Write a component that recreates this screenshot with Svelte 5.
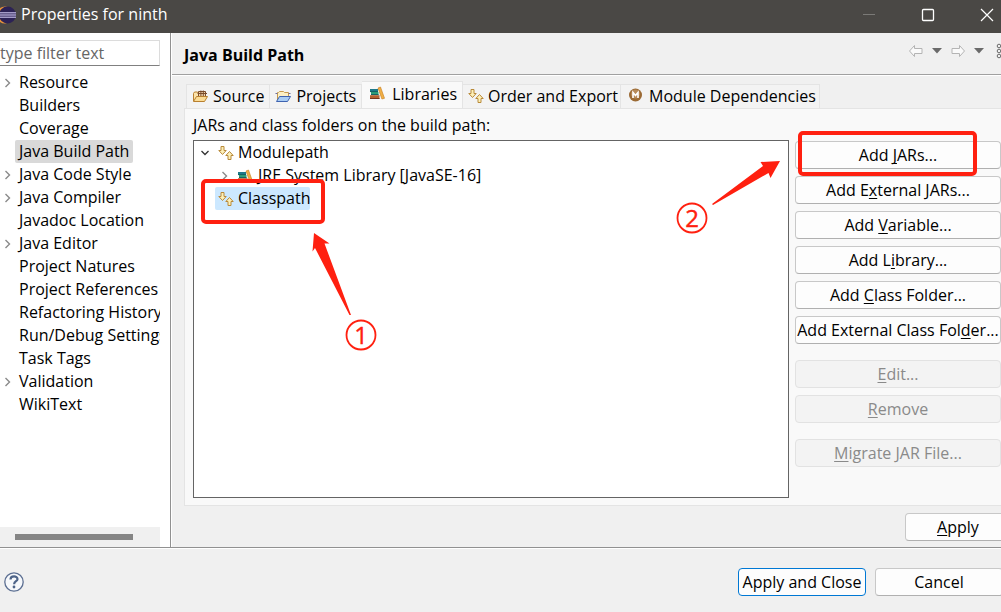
<script>
  const pages = [
    { name: 'Resource', open: true },
    { name: 'Builders' },
    { name: 'Coverage' },
    { name: 'Java Build Path', selected: true },
    { name: 'Java Code Style', open: true },
    { name: 'Java Compiler', open: true },
    { name: 'Javadoc Location' },
    { name: 'Java Editor', open: true },
    { name: 'Project Natures' },
    { name: 'Project References' },
    { name: 'Refactoring History' },
    { name: 'Run/Debug Settings' },
    { name: 'Task Tags' },
    { name: 'Validation', open: true },
    { name: 'WikiText' },
  ];
  const tabs = [
    { name: 'Source', icon: 'source' },
    { name: 'Projects', icon: 'projects' },
    { name: 'Libraries', icon: 'books', active: true },
    { name: 'Order and Export', icon: 'order' },
    { name: 'Module Dependencies', icon: 'module' },
  ];
  // Each label is split round its mnemonic letter.
  const groups = [
    [
      { label: ['Add ', 'J', 'ARs...'], marked: true },
      { label: ['Add E', 'x', 'ternal JARs...'] },
      { label: ['Add ', 'V', 'ariable...'] },
      { label: ['Add L', 'i', 'brary...'] },
      { label: ['Add ', 'C', 'lass Folder...'] },
      { label: ['Add External Class Fol', 'd', 'er...'] },
    ],
    [
      { label: ['', 'E', 'dit...'], off: true },
      { label: ['', 'R', 'emove'], off: true },
    ],
    [{ label: ['', 'M', 'igrate JAR File...'], off: true }],
  ];
</script>

{#snippet icon(kind)}
  <svg class="icon" viewBox="0 0 16 16" width="16" height="16" aria-hidden="true">
    {#if kind === 'source'}
      <path d="M1.500 13V5.500l1-1.500h3l1 1.500h1" fill="#fbe3ab" stroke="#b9802f" />
      <path d="M6.500 3.500h7v5h-7z" fill="#f2d6ae" stroke="#7a4b2a" />
      <path d="M8.900 2.500v6M11.300 2.500v6M5.500 5.500h9.500" stroke="#7a4b2a" fill="none" />
      <path d="M1.500 13.500L4.500 8.500h11L12.500 13.500z" fill="#fbdc96" stroke="#b9802f" />
    {:else if kind === 'projects'}
      <path d="M2.500 13V4.500h1l1-1h4l1 1h4v4" fill="#fdf0c4" stroke="#c79a4e" />
      <path d="M.5 5.500h2M13.500 5.500h2" stroke="#6f6f9c" />
      <path d="M1.500 13.500L4.500 8.500h11L12.500 13.500z" fill="#a9cdf5" stroke="#3f63b0" />
    {:else if kind === 'books'}
      <path d="M1 4h8v3H1z" fill="#1f7a8a" />
      <path d="M2 7h7.500v3H2z" fill="#2f9f78" />
      <path d="M1 6.600h8M2 9.600h7.500" stroke="#155f63" />
      <path d="M1 10.200h9.500V14H1z" fill="#b5622f" />
      <path d="M1 13.500h9.500" stroke="#7a351b" />
      <path d="M9 3l2.500-1 4 11.300-2.600.7z" fill="#f2b045" stroke="#c27a1d" stroke-width=".6" />
    {:else if kind === 'order'}
      <path d="M3 1.500h3v4h2.200L4.500 9.500.8 5.500H3z" fill="#fdf0b8" stroke="#b98a3a" stroke-linejoin="round" />
      <path d="M10 14.500h3v-4h2.200L11.500 6.500 7.800 10.500H10z" fill="#fdf0b8" stroke="#b98a3a" stroke-linejoin="round" />
    {:else}
      <circle cx="7.500" cy="7" r="6.500" fill="#9b6a34" />
      <circle cx="7.500" cy="6" r="4.500" fill="#b78a59" />
      <path d="M5 10V4.500l2.500 3 2.500-3V10" fill="none" stroke="#fff" stroke-width="1.600" />
    {/if}
  </svg>
{/snippet}

{#snippet chevron()}
  <svg class="chevron" viewBox="0 0 8 10" width="8" height="10" aria-hidden="true">
    <path d="M1.500 1L5.500 5l-4 4" fill="none" stroke="#8a8a8a" stroke-width="1.400" />
  </svg>
{/snippet}

<div class="dialog">
  <header class="titlebar">
    <svg class="logo" viewBox="0 0 16 20" width="16" height="20" aria-hidden="true">
      <circle cx="5" cy="10" r="8.500" fill="#e8923a" />
      <circle cx="7.500" cy="10" r="8.500" fill="#2c2255" />
      <path d="M0 7.700h16M0 10h16M0 12.300h16" stroke="#a49cc8" stroke-width="1.500" />
    </svg>
    <span class="title">Properties for ninth</span>
    <button class="win" aria-label="Minimize"><svg viewBox="0 0 14 14" width="14" height="14"><path d="M1 6.500h12" stroke="#7b7a77" /></svg></button>
    <button class="win" aria-label="Maximize"><svg viewBox="0 0 14 14" width="14" height="14"><rect x="1.500" y="1.500" width="11" height="11" rx="1" fill="none" stroke="#fff" stroke-width="1.300" /></svg></button>
    <button class="win" aria-label="Close"><svg viewBox="0 0 14 14" width="14" height="14"><path d="M1 1l12 12M13 1L1 13" stroke="#fff" stroke-width="1.200" /></svg></button>
  </header>

  <div class="body">
    <nav class="side">
      <input class="filter" type="text" placeholder="type filter text" aria-label="Filter pages" />
      <ul class="pages">
        {#each pages as page}
          <li>
            <span class="twist">{#if page.open}{@render chevron()}{/if}</span>
            <a href="#page" class:selected={page.selected}>{page.name}</a>
          </li>
        {/each}
      </ul>
      <div class="scroll"><div class="thumb"></div></div>
    </nav>

    <main class="content">
      <div class="head">
        <h1>Java Build Path</h1>
        <div class="history">
          <button aria-label="Back"><svg viewBox="0 0 16 14" width="16" height="14"><path d="M1.500 7l5-5.500v3h7.500v5H6.500v3z" fill="#fafafa" stroke="#b4b4b4" stroke-linejoin="round" /></svg></button>
          <button aria-label="Back history"><svg viewBox="0 0 10 6" width="10" height="6"><path d="M0 0h10L5 5.500z" fill="#6a6a6a" /></svg></button>
          <button aria-label="Forward"><svg viewBox="0 0 16 14" width="16" height="14"><path d="M14.500 7l-5-5.500v3H2v5h7.500v3z" fill="#fafafa" stroke="#b4b4b4" stroke-linejoin="round" /></svg></button>
          <button aria-label="Forward history"><svg viewBox="0 0 10 6" width="10" height="6"><path d="M0 0h10L5 5.500z" fill="#6a6a6a" /></svg></button>
          <button class="more" aria-label="View menu"><svg viewBox="0 0 5 16" width="5" height="16"><g fill="none" stroke="#6a6a6a"><circle cx="3" cy="3" r="1.800" /><circle cx="3" cy="8" r="1.800" /><circle cx="3" cy="13" r="1.800" /></g></svg></button>
        </div>
      </div>

      <div class="tabs" role="tablist">
        {#each tabs as tab}
          <button role="tab" class={['tab', tab.icon, tab.active && 'active']} aria-selected={!!tab.active}>
            {@render icon(tab.icon)}{tab.name}
          </button>
        {/each}
      </div>

      <section class="panel">
        <p class="caption">JARs and class folders on the build pa<u>t</u>h:</p>
        <div class="columns">
          <div class="tree">
            <div class="node">
              <svg class="down" viewBox="0 0 10 8" width="10" height="8" aria-hidden="true"><path d="M1.500 2L5 5.500 8.500 2" fill="none" stroke="#333" stroke-width="1.300" /></svg>
              <span class="item">{@render icon('order')}Modulepath</span>
            </div>
            <div class="node child">
              {@render chevron()}
              <span class="item">{@render icon('books')}JRE System Library [JavaSE-16]</span>
            </div>
            <div class="node leaf">
              <span class="item chosen">{@render icon('order')}Classpath</span>
              <span class="mark"></span>
            </div>
            <svg class="arrow one" viewBox="0 0 44 86" width="44" height="86" aria-hidden="true"><path d="M4 2L19.500 12.500 14.500 12.500 41 84 39.500 84 5 17 2.500 20.500z" fill="#ff2010" /></svg>
            <svg class="badge first" viewBox="0 0 32 32" width="32" height="32"><circle cx="16" cy="16" r="14.500" fill="none" stroke="#ff2010" stroke-width="1.800" /><text x="16" y="25" text-anchor="middle">1</text></svg>
            <svg class="arrow two" viewBox="0 0 72 48" width="72" height="48" aria-hidden="true"><path d="M70 2L60.500 19 58.500 14 3 46 2 45 53 7 50.500 3z" fill="#ff2010" /></svg>
            <svg class="badge second" viewBox="0 0 32 32" width="32" height="32"><circle cx="16" cy="16" r="14.500" fill="none" stroke="#ff2010" stroke-width="1.800" /><text x="16" y="25" text-anchor="middle">2</text></svg>
          </div>
          <div class="actions">
            {#each groups as group}
              <div class="group">
                {#each group as action}
                  <div class="slot">
                    <button class="btn" disabled={action.off}>{action.label[0]}<u>{action.label[1]}</u>{action.label[2]}</button>
                    {#if action.marked}<span class="mark"></span>{/if}
                  </div>
                {/each}
              </div>
            {/each}
          </div>
        </div>
      </section>

      <div class="apply"><button class="btn"><u>A</u>pply</button></div>
    </main>
  </div>

  <footer class="footer">
    <button class="help" aria-label="Help"><svg viewBox="0 0 20 20" width="20" height="20"><circle cx="10" cy="10" r="9.200" fill="#f6f8fb" stroke="#5c6f92" stroke-width="1.300" /><path d="M6.500 7.500C6.500 3.200 13.600 3.400 13.500 7.200 13.400 9.300 10.200 9.200 10.100 12.200" fill="none" stroke="#4d6388" stroke-width="2.200" /><circle cx="10" cy="15" r="1.400" fill="#4d6388" /></svg></button>
    <button class="btn primary">Apply and Close</button>
    <button class="btn cancel">Cancel</button>
  </footer>
</div>

<style>
  :global(body) { margin: 0; overflow: hidden; }
  .dialog, .dialog * { box-sizing: border-box; }
  .dialog {
    display: flex; flex-direction: column; height: 100vh; overflow: hidden;
    background: #f0f0f0; color: #000;
    font: 16px/23px "Open Sans", "Noto Sans", sans-serif;
  }
  button { font: inherit; color: inherit; background: none; border: 0; padding: 0; }
  svg { display: block; flex: none; }
  u { text-underline-offset: 2px; text-decoration-thickness: 1px; text-decoration-skip-ink: none; }

  .titlebar { display: flex; align-items: center; height: 33px; flex: none; padding-bottom: 4px; background: #4a4845; color: #fff; }
  .title { flex: 1; padding-left: 5px; }
  .win { display: flex; width: 59px; justify-content: center; }
  .win:last-child { margin-right: -15px; }

  .body { display: flex; flex: 1; min-height: 0; }
  .side { display: flex; flex-direction: column; width: 171px; flex: none; padding: 7px 10px 0 0; background: #fff; border-right: 1px solid #919191; }
  .filter { width: 100%; height: 26px; padding: 0; font: inherit; background: #fff; border: 1px solid #dcdcdc; border-left: 0; border-bottom-color: #808080; outline: 0; }
  .filter::placeholder { color: #666; opacity: 1; }
  .pages { flex: 1; margin: 0; padding: 5px 0 0; list-style: none; overflow: hidden; }
  .pages li { display: flex; height: 23px; white-space: nowrap; }
  .twist { display: flex; align-items: center; width: 15px; flex: none; padding-left: 4px; }
  .pages a { color: inherit; text-decoration: none; padding: 0 4px; border-radius: 2px; }
  .selected { background: #d9d9d9; }
  .scroll { height: 20px; flex: none; padding: 7px 27px 0 15px; background: #f0f0f0; }
  .thumb { height: 6px; background: #858585; }

  .content { display: flex; flex-direction: column; flex: 1; min-width: 0; border-left: 1px solid #fff; }
  .head { display: flex; align-items: center; justify-content: space-between; height: 42px; flex: none; padding-left: 12px; border-bottom: 1px solid #a0a0a0; box-shadow: 0 1px #fff; }
  h1 { margin: 0; padding-top: 3px; font-size: 16px; line-height: 23px; font-weight: 700; }
  .history { display: flex; align-items: center; gap: 8px; padding-bottom: 5px; }
  .history .more { margin-left: 4px; }

  .tabs { display: flex; align-items: flex-end; height: 33px; flex: none; padding-left: 14px; }
  .tab { display: flex; align-items: center; gap: 5px; height: 24px; padding: 0 5px; white-space: nowrap; background: #f3f3f3; border: 1px solid #e4e4e4; border-width: 1px 1px 0 0; }
  .tab:first-child { border-left-width: 1px; }
  .tab.active { gap: 7px; height: 27px; padding: 0 5px 2px 7px; background: #f9f9f9; }
  .tab .icon { margin-bottom: 2px; }
  .tab.order { gap: 4px; padding-right: 2px; }
  .tab.module { padding: 0 3px 0 7px; }

  .panel { display: flex; flex-direction: column; flex: 1; min-height: 0; margin-left: 12px; padding: 5px 0 7px 8px; background: #f9f9f9; border: 1px solid #e4e4e4; border-right: 0; }
  .caption { margin: 0 0 3px; }
  .columns { display: flex; flex: 1; min-height: 0; gap: 6px; }
  .tree { position: relative; flex: 1; min-width: 0; background: #fff; border: 1px solid #646464; }
  .node { position: relative; display: flex; align-items: center; height: 23px; padding-left: 6px; white-space: nowrap; }
  .item { display: flex; align-items: center; gap: 4px; padding: 0 3px; border-radius: 2px; }
  .down { margin-right: 5px; }
  .child { padding-left: 27px; }
  .child .item { margin-left: 5px; gap: 5px; }
  .leaf { padding-left: 21px; }
  .chosen { padding-right: 0; background: #cce8ff; }
  .mark { position: absolute; border: 4px solid #ff2010; border-radius: 5px; pointer-events: none; }
  .leaf .mark { left: 7px; top: -8px; width: 124px; height: 45px; }
  .arrow, .badge { position: absolute; }
  .one { left: 116px; top: 90px; }
  .first { left: 151px; top: 178px; }
  .two { left: 516px; top: 18px; }
  .second { left: 482px; top: 61px; }
  .badge text { font: 500 24px "Open Sans", sans-serif; fill: #ff2010; stroke: #ff2010; stroke-width: 0.4px; }

  .actions { display: flex; flex-direction: column; gap: 16px; width: 206px; flex: none; padding-top: 1px; }
  .group { display: flex; flex-direction: column; gap: 7px; }
  .slot { position: relative; display: grid; }
  .slot .mark { left: 3px; top: -10px; width: 179px; height: 45px; }
  .btn { height: 28px; white-space: nowrap; background: #fdfdfd; border: 1px solid #c8c8c8; border-bottom-color: #b0b0b0; border-radius: 4px; }
  .btn:disabled { color: #8a8a8a; background: #f3f3f3; border-color: #e2e2e2; }

  .apply { display: flex; justify-content: flex-end; height: 41px; flex: none; padding-top: 7px; overflow: hidden; }
  .apply .btn { width: 106px; margin-right: -10px; }
  .footer { display: flex; align-items: center; height: 65px; flex: none; padding-left: 4px; padding-top: 4px; border-top: 1px solid #919191; box-shadow: inset 0 1px #fff; }
  .help { margin-right: auto; }
  .primary { width: 128px; border-color: #0078d4; }
  .cancel { width: 128px; margin: 0 -2px 0 9px; }
</style>
